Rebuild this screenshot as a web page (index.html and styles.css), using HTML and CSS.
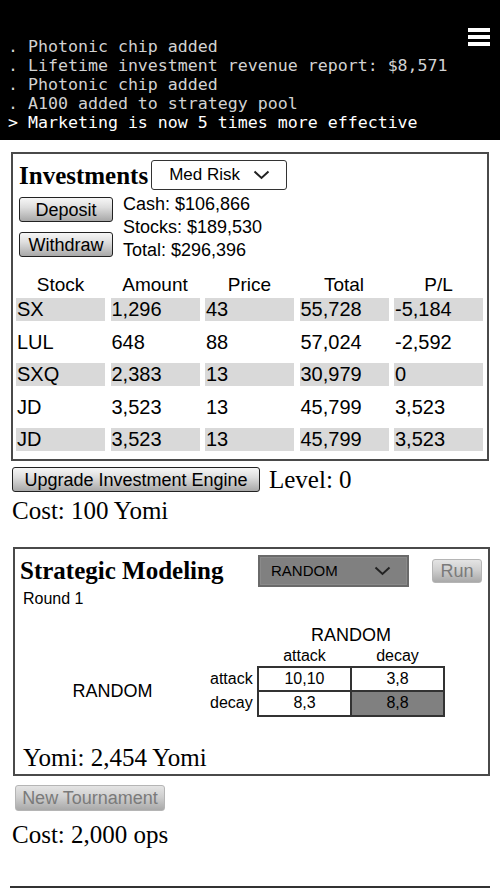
FILE: index.html
```html
<!DOCTYPE html>
<html lang="en">
<head>
<meta charset="utf-8">
<title>Paperclips</title>
<link rel="stylesheet" href="styles.css">
</head>
<body>
<header class="console">
  <div class="menu" aria-label="Menu"><span></span><span></span><span></span></div>
  <div class="log">
    <div class="line">. Photonic chip added</div>
    <div class="line">. Lifetime investment revenue report: $8,571</div>
    <div class="line">. Photonic chip added</div>
    <div class="line">. A100 added to strategy pool</div>
    <div class="line current">&gt; Marketing is now 5 times more effective</div>
  </div>
</header>

<main class="page">
  <section class="panel invest">
    <div class="panel-head">
      <h2 class="panel-title">Investments</h2>
      <div class="select risk">
        <span>Med Risk</span>
        <svg class="chev" width="17" height="10" viewBox="0 0 17 10"><polyline points="1.5,1.5 8.5,8 15.5,1.5" fill="none" stroke="#222" stroke-width="2"/></svg>
      </div>
    </div>
    <div class="funds">
      <div class="fund-buttons">
        <button class="btn fund">Deposit</button>
        <button class="btn fund">Withdraw</button>
      </div>
      <div class="balances">
        <div>Cash: $106,866</div>
        <div>Stocks: $189,530</div>
        <div>Total: $296,396</div>
      </div>
    </div>
    <div class="holdings-head">
      <div>Stock</div><div>Amount</div><div>Price</div><div>Total</div><div>P/L</div>
    </div>
    <div class="holdings">
      <div class="shade">SX</div><div class="shade">1,296</div><div class="shade">43</div><div class="shade">55,728</div><div class="shade">-5,184</div>
      <div>LUL</div><div>648</div><div>88</div><div>57,024</div><div>-2,592</div>
      <div class="shade">SXQ</div><div class="shade">2,383</div><div class="shade">13</div><div class="shade">30,979</div><div class="shade">0</div>
      <div>JD</div><div>3,523</div><div>13</div><div>45,799</div><div>3,523</div>
      <div class="shade">JD</div><div class="shade">3,523</div><div class="shade">13</div><div class="shade">45,799</div><div class="shade">3,523</div>
    </div>
  </section>

  <div class="upgrade-row">
    <button class="btn upgrade">Upgrade Investment Engine</button>
    <span class="serif">Level: 0</span>
  </div>
  <div class="serif cost">Cost: 100 Yomi</div>

  <section class="panel strat">
    <div class="panel-head strat-head">
      <h2 class="panel-title">Strategic Modeling</h2>
      <div class="select strategy">
        <span>RANDOM</span>
        <svg class="chev" width="17" height="10" viewBox="0 0 17 10"><polyline points="1.5,1.5 8.5,8 15.5,1.5" fill="none" stroke="#222" stroke-width="2"/></svg>
      </div>
      <button class="btn off run">Run</button>
    </div>
    <div class="round">Round 1</div>
    <table class="payoff">
      <colgroup><col class="c-left"><col class="c-lab"><col class="c-cell"><col class="c-cell"></colgroup>
      <tr class="opp"><td></td><td></td><td colspan="2">RANDOM</td></tr>
      <tr class="moves"><td></td><td></td><td>attack</td><td>decay</td></tr>
      <tr>
        <td class="me" rowspan="2">RANDOM</td>
        <td class="lab">attack</td>
        <td class="cell">10,10</td>
        <td class="cell">3,8</td>
      </tr>
      <tr>
        <td class="lab">decay</td>
        <td class="cell">8,3</td>
        <td class="cell hit">8,8</td>
      </tr>
    </table>
    <div class="serif yomi">Yomi: 2,454 Yomi</div>
  </section>

  <button class="btn off tourney">New Tournament</button>
  <div class="serif ops">Cost: 2,000 ops</div>
  <hr class="rule">
</main>
</body>
</html>
```
FILE: styles.css
```css
html, body {
  margin: 0;
  padding: 0;
  background: #fff;
  color: #000;
  font-family: "Liberation Sans", Arial, sans-serif;
}

/* console strip */
.console {
  position: relative;
  height: 140px;
  box-sizing: border-box;
  background: #000;
  padding: 37px 0 0 8px;
}
.log {
  font-family: "DejaVu Sans Mono", "Liberation Mono", monospace;
  font-size: 16.6px;
  line-height: 19px;
  color: #d2d2d2;
}
.log .line { white-space: pre; }
.log .current { color: #fff; }

.menu {
  position: absolute;
  top: 28px;
  right: 10px;
  width: 22px;
  display: flex;
  flex-direction: column;
  gap: 3px;
}
.menu span {
  display: block;
  height: 4px;
  background: #fff;
}

/* page body */
.page {
  padding: 0 10px;
}
.serif {
  font-family: "Liberation Serif", "Times New Roman", serif;
  font-size: 25px;
  line-height: 28px;
}

.panel {
  border: 2px solid #4a4a4a;
  box-sizing: border-box;
}
.panel-head {
  display: flex;
  align-items: center;
}
.panel-title {
  margin: 0;
  font-family: "Liberation Serif", "Times New Roman", serif;
  font-weight: bold;
  font-size: 25px;
  line-height: 30px;
}

/* select boxes */
.select {
  display: flex;
  align-items: center;
  justify-content: space-between;
  box-sizing: border-box;
}
.risk {
  width: 136px;
  height: 30px;
  margin-left: 3px;
  padding: 0 16px 0 17px;
  border: 1.5px solid #333;
  border-radius: 3px;
  font-size: 17px;
  background: #fff;
}
.strategy {
  width: 151px;
  height: 32px;
  margin-left: auto;
  padding: 0 16px 0 11px;
  border: 2px solid #6a6a6a;
  background: #808080;
  font-size: 15px;
  box-shadow: inset 0 0 0 1px #8a8a8a;
}
.chev { display: block; }

/* buttons */
.btn {
  font-family: "Liberation Sans", Arial, sans-serif;
  font-size: 18px;
  color: #000;
  box-sizing: border-box;
  border: 1px solid #222;
  border-radius: 3px;
  padding: 0;
  background: linear-gradient(#f6f6f6 0%, #dedede 40%, #a8a8a8 100%);
  line-height: 1;
}
.btn.off {
  color: #7a7a7a;
  border: 1px solid #b5b5b5;
  background: linear-gradient(#e4e4e4 0%, #cfcfcf 45%, #a9a9a9 100%);
}

/* investments */
.invest {
  margin: 12px 0 0 1px;
  width: 478px;
  padding: 6px 4px 8px 3px;
}
.invest .panel-head { padding-left: 3px; }
.invest .panel-title { position: relative; top: 1px; }

.funds {
  display: flex;
  gap: 10px;
  margin-top: 2.5px;
  padding-left: 3px;
}
.fund-buttons {
  display: flex;
  flex-direction: column;
  gap: 10px;
  padding-top: 4.5px;
}
.fund {
  width: 94px;
  height: 25px;
}
.balances {
  font-size: 18px;
  line-height: 23px;
}

.holdings-head,
.holdings {
  display: grid;
  grid-template-columns: repeat(5, 1fr);
  column-gap: 5.5px;
}
.holdings-head {
  margin-top: 11px;
  font-size: 19px;
  line-height: 23px;
  text-align: center;
}
.holdings {
  margin-top: 2.5px;
  row-gap: 10px;
  font-size: 20px;
  line-height: 22.5px;
}
.holdings div { padding-left: 1px; }
.holdings .shade { background: #d9d9d9; }

.upgrade-row {
  display: flex;
  align-items: center;
  gap: 9px;
  margin: 5px 0 0 2px;
}
.upgrade {
  width: 248px;
  height: 25px;
}
.cost {
  margin: 3px 0 0 2px;
}

/* strategic modeling */
.strat {
  margin: 22px 0 0 3px;
  width: 477px;
  padding: 6px 6px 2px 5px;
}
.run {
  width: 50px;
  height: 24px;
  margin-left: 23px;
}
.round {
  margin-top: 2px;
  padding-left: 3px;
  font-size: 16px;
  line-height: 20px;
}

.payoff {
  margin: 15px 0 0 -5px;
  border-collapse: collapse;
  table-layout: fixed;
  width: 429px;
}
.payoff td {
  padding: 0;
  text-align: center;
  font-size: 16px;
}
.c-left { width: 195px; }
.c-lab { width: 48px; }
.c-cell { width: 93px; }
.payoff .opp td { font-size: 18px; line-height: 22px; }
.payoff .moves td { line-height: 20px; }
.payoff .me { font-size: 18px; vertical-align: middle; }
.payoff .lab { text-align: right; padding-right: 6px; line-height: 22px; }
.payoff .cell {
  border: 2px solid #333;
  line-height: 22.5px;
}
.payoff .hit { background: #808080; }

.yomi {
  margin-top: 27px;
  padding-left: 3px;
}

.tourney {
  display: block;
  margin: 9px 0 0 5px;
  width: 150px;
  height: 26px;
}
.ops {
  margin: 10px 0 0 2px;
}
.rule {
  margin: 37px 0 0;
  border: 0;
  height: 2px;
  background: #333;
}
```
